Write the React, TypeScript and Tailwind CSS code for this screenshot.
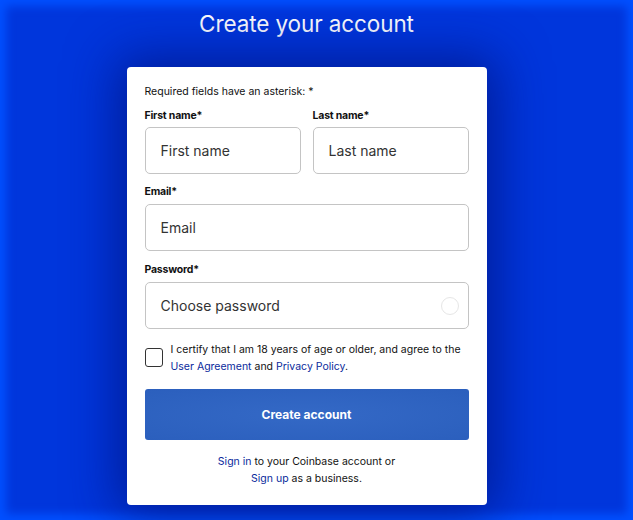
import React from "react";

export default function App() {
  return (
    <div
      className="relative h-[520px] w-[633px] overflow-hidden bg-[#0036dc] shadow-[inset_0_0_10px_6px_#0050ff]"
      style={{ fontFamily: "Inter, 'Liberation Sans', sans-serif" }}
    >
      <div className="flex flex-col items-center pr-[20px]">
        <h1 className="mt-[9px] text-[22.5px] leading-[30px] text-white font-normal tracking-[-0.1px]">
          Create your account
        </h1>
        <div className="mt-[28px] w-[360px] rounded-[4px] bg-white px-[18px] pt-[18px] pb-[18px] shadow-[0_0_50px_10px_rgba(0,20,130,0.75)]">
          <p className="text-[10.5px] leading-[14px] text-[#111]">Required fields have an asterisk: *</p>
          <div className="mt-[10px] flex gap-[12px]">
            <div className="flex-1">
              <label className="block text-[10.5px] font-bold leading-[14px] text-[#111] tracking-[-0.2px]">First name*</label>
              <div className="mt-[4px] flex h-[47px] items-center rounded-[5px] border border-[#c4c4c4] px-[15px] text-[14px] text-[#333]">
                First name
              </div>
            </div>
            <div className="flex-1">
              <label className="block text-[10.5px] font-bold leading-[14px] text-[#111] tracking-[-0.2px]">Last name*</label>
              <div className="mt-[4px] flex h-[47px] items-center rounded-[5px] border border-[#c4c4c4] px-[15px] text-[14px] text-[#333]">
                Last name
              </div>
            </div>
          </div>
          <label className="mt-[11px] block text-[10.5px] font-bold leading-[14px] text-[#111] tracking-[-0.2px]">Email*</label>
          <div className="mt-[5px] flex h-[47px] items-center rounded-[5px] border border-[#c4c4c4] px-[15px] text-[14px] text-[#333]">
            Email
          </div>
          <label className="mt-[12px] block text-[10.5px] font-bold leading-[14px] text-[#111] tracking-[-0.2px]">Password*</label>
          <div className="mt-[5px] flex h-[47px] items-center justify-between rounded-[5px] border border-[#c4c4c4] pl-[15px] pr-[9px] text-[14px] text-[#333]">
            <span>Choose password</span>
            <span className="h-[18px] w-[18px] rounded-full border-[1.5px] border-[#e6e6e6]" />
          </div>
          <div className="mt-[12px] flex items-start gap-[8px]">
            <span className="mt-[7px] h-[19px] w-[18px] shrink-0 rounded-[3px] border-[1.5px] border-[#333]" />
            <p className="text-[10.5px] leading-[17px] text-[#111]">
              I certify that I am 18 years of age or older, and agree to the{" "}
              <span className="text-[#0a2a9c]">User Agreement</span> and{" "}
              <span className="text-[#0a2a9c]">Privacy Policy</span>.
            </p>
          </div>
          <button className="mt-[14px] flex h-[51px] w-full items-center justify-center rounded-[3px] bg-[radial-gradient(ellipse_at_center,#3469c6,#2b5fbd)] text-[12px] font-bold text-white">
            Create account
          </button>
          <div className="mt-[13px] text-center text-[10.5px] leading-[17px] text-[#111]">
            <p>
              <span className="text-[#0a2a9c]">Sign in</span> to your Coinbase account or
            </p>
            <p>
              <span className="text-[#0a2a9c]">Sign up</span> as a business.
            </p>
          </div>
        </div>
      </div>
    </div>
  );
}
